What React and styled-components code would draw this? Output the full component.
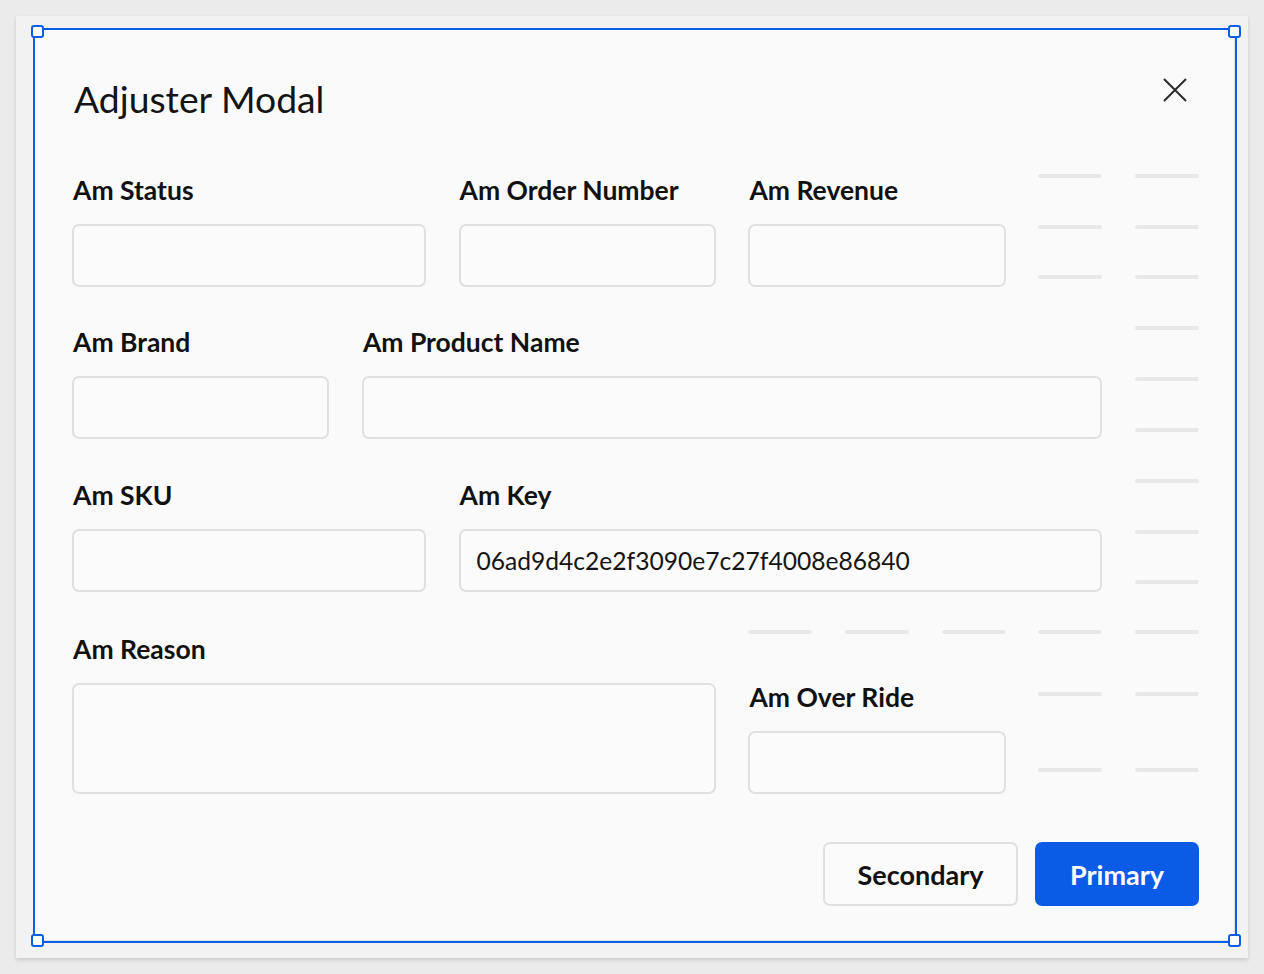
import styled, { createGlobalStyle } from "styled-components";

const GlobalStyle = createGlobalStyle`
    html, body {
        margin: 0;
        padding: 0;
        background: #ebebeb;
    }
    body {
        font-family: Lato, "Open Sans", sans-serif;
        color: #151515;
    }
    * {
        box-sizing: border-box;
    }
`;

const fields = [
    { label: "Am Status", col: "1 / span 4", row: "1 / span 3" },
    { label: "Am Order Number", col: "5 / span 3", row: "1 / span 3" },
    { label: "Am Revenue", col: "8 / span 3", row: "1 / span 3" },
    { label: "Am Brand", col: "1 / span 3", row: "4 / span 3" },
    { label: "Am Product Name", col: "4 / span 8", row: "4 / span 3" },
    { label: "Am SKU", col: "1 / span 4", row: "7 / span 3" },
    { label: "Am Key", col: "5 / span 7", row: "7 / span 3", value: "06ad9d4c2e2f3090e7c27f4008e86840" },
    { label: "Am Reason", col: "1 / span 7", row: "10 / span 3", tall: true, offset: 3 },
    { label: "Am Over Ride", col: "8 / span 3", row: "10 / span 3", offset: 51 },
];

// empty cells of the layout grid, [column, row]
const emptyCells = [
    [11, 1], [12, 1], [11, 2], [12, 2], [11, 3], [12, 3],
    [12, 4], [12, 5], [12, 6], [12, 7], [12, 8], [12, 9],
    [8, 10], [9, 10], [10, 10], [11, 10], [12, 10],
    [11, 11], [12, 11], [11, 12], [12, 12],
];

const Handle = ({ corner }) => <Knob $corner={corner} />;

const App = () => {
    return (
        <>
            <GlobalStyle />
            <Page>
                <Panel>
                    <Frame>
                        <Handle corner="tl" />
                        <Handle corner="tr" />
                        <Handle corner="bl" />
                        <Handle corner="br" />
                        <Header>
                            <Title>Adjuster Modal</Title>
                            <CloseButton aria-label="Close">
                                <svg width="24" height="24" viewBox="0 0 24 24" fill="none">
                                    <path d="M1 1L23 23M23 1L1 23" stroke="#2b2b2b" strokeWidth="2" />
                                </svg>
                            </CloseButton>
                        </Header>
                        <FormGrid>
                            {emptyCells.map(([c, r]) => (
                                <Dash key={`${c}-${r}`} $col={c} $row={r} />
                            ))}
                            {fields.map((f) => (
                                <Field key={f.label} $col={f.col} $row={f.row} $offset={f.offset || 0}>
                                    <Label>{f.label}</Label>
                                    {f.tall ? <TextArea /> : <Input defaultValue={f.value || ""} />}
                                </Field>
                            ))}
                        </FormGrid>
                        <Footer>
                            <Button>Secondary</Button>
                            <Button $primary>Primary</Button>
                        </Footer>
                    </Frame>
                </Panel>
            </Page>
        </>
    );
};

const Page = styled.div`
    width: 1264px;
    height: 974px;
    padding: 16px;
`;

const Panel = styled.div`
    width: 1232px;
    height: 942px;
    background: #f2f2f2;
    box-shadow: 0 2px 4px rgba(0, 0, 0, 0.14);
    padding: 12px 0 0 17px;
`;

const Frame = styled.div`
    position: relative;
    width: 1204px;
    height: 915px;
    border: 2px solid #0a5fe6;
    background: #fafafa;
    box-shadow: inset -1px -1px 0 #e2e2e2;
    padding: 0 34px 0 37px;
`;

const Knob = styled.span`
    position: absolute;
    width: 13px;
    height: 13px;
    border: 2px solid #0a5fe6;
    border-radius: 3px;
    background: #ffffff;
    ${({ $corner }) => ($corner[0] === "t" ? "top: -5px;" : "bottom: -6px;")}
    ${({ $corner }) => ($corner[1] === "l" ? "left: -4px;" : "right: -6px;")}
`;

const Header = styled.div`
    display: flex;
    align-items: flex-start;
    justify-content: space-between;
    padding-top: 47px;
    height: 144px;
`;

const Title = styled.h1`
    margin: 0 0 0 2px;
    font-size: 37.3px;
    line-height: 44px;
    font-weight: 400;
    color: #141414;
`;

const CloseButton = styled.button`
    border: none;
    background: none;
    padding: 0;
    margin: 1px 14px 0 0;
    width: 24px;
    height: 24px;
    cursor: pointer;
`;

const FormGrid = styled.div`
    display: grid;
    grid-template-columns: repeat(12, 1fr);
    grid-template-rows: 51px 50px 51px 51px 51px 51px 51px 50px 50px 62px 76px 50px;
    column-gap: 32.6px;
    width: 1127px;
`;

const Dash = styled.span`
    grid-column: ${({ $col }) => $col};
    grid-row: ${({ $row }) => $row};
    align-self: start;
    height: 4px;
    border-radius: 2px;
    background: #e8e8e8;
`;

const Field = styled.div`
    grid-column: ${({ $col }) => $col};
    grid-row: ${({ $row }) => $row};
    display: flex;
    flex-direction: column;
    gap: 17px;
    padding-top: ${({ $offset }) => $offset}px;
    z-index: 1;
`;

const Label = styled.label`
    font-size: 26.5px;
    line-height: 33px;
    font-weight: 700;
    color: #111111;
    padding-left: 1px;
    white-space: nowrap;
`;

const Input = styled.input`
    height: 63px;
    width: 100%;
    border: 2px solid #e0e0e0;
    border-radius: 7px;
    background: #fbfbfb;
    padding: 0 16px;
    font-family: Lato, "Open Sans", sans-serif;
    font-size: 24.6px;
    color: #141414;
    outline: none;
`;

const TextArea = styled.textarea`
    height: 111px;
    width: 100%;
    border: 2px solid #e0e0e0;
    border-radius: 7px;
    background: #fbfbfb;
    padding: 14px 16px;
    font-family: Lato, "Open Sans", sans-serif;
    font-size: 24px;
    resize: none;
    outline: none;
`;

const Footer = styled.div`
    display: flex;
    justify-content: flex-end;
    gap: 17px;
    margin-top: 24px;
    padding-right: 2px;
`;

const Button = styled.button`
    height: 64px;
    padding: 0 30px;
    min-width: ${({ $primary }) => ($primary ? "164px" : "195px")};
    border-radius: 7px;
    border: 2px solid ${({ $primary }) => ($primary ? "#0a5ce6" : "#e0e0e0")};
    background: ${({ $primary }) => ($primary ? "#0a5ce6" : "#fbfbfb")};
    color: ${({ $primary }) => ($primary ? "#ffffff" : "#111111")};
    font-family: Lato, "Open Sans", sans-serif;
    font-size: 27px;
    font-weight: 700;
    cursor: pointer;
`;

export default App;
